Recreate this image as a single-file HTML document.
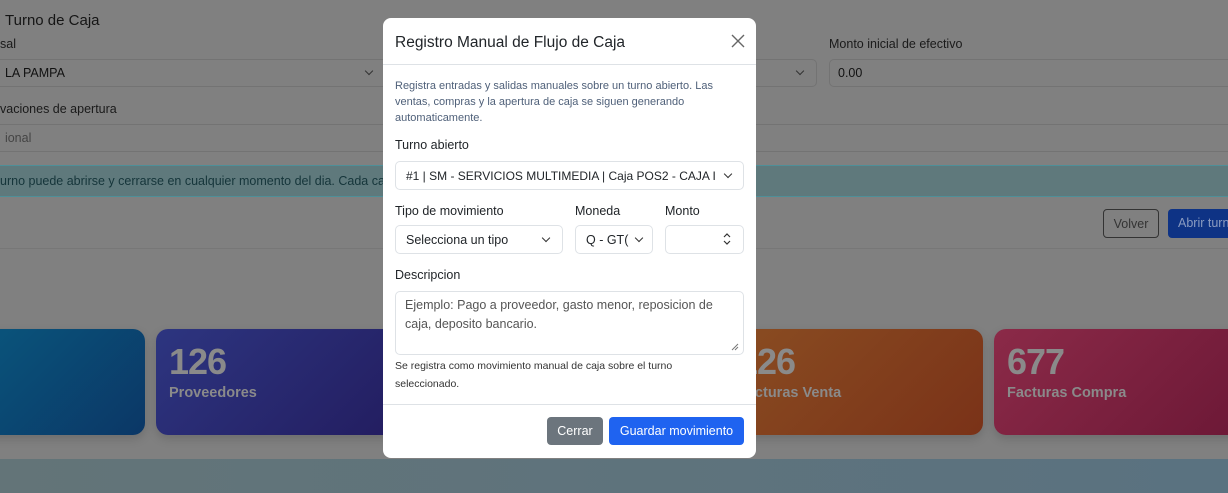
<!DOCTYPE html>
<html><head><meta charset="utf-8"><style>
*{box-sizing:border-box;margin:0;padding:0}
body{width:1228px;height:493px;overflow:hidden;background:#808080;font-family:"Liberation Sans",sans-serif;position:relative;color:#1a1a1a}
.abs{position:absolute}
.inp{position:absolute;border:1px solid #737373;border-radius:5px;height:28px;font-size:12.5px;padding:6px 8px;color:#111}
.chev{position:absolute;width:6px;height:6px;border-right:1.3px solid #333;border-bottom:1.3px solid #333;transform:rotate(45deg)}
.card{position:absolute;top:329px;height:106px;border-radius:12px;box-shadow:0 4px 10px rgba(0,0,0,.15)}
.card .n{position:absolute;left:13px;top:12px;font-size:36px;font-weight:bold;color:#8a8a8a;letter-spacing:-1px}
.card .t{position:absolute;left:13px;top:56px;font-size:14.5px;font-weight:bold;color:#8a8a8a}
.modal{position:absolute;left:383px;top:18px;width:373px;height:440px;background:#fff;border-radius:8px}
.m{position:absolute;font-size:12.5px;color:#212529}
.f{position:absolute;border:1px solid #dee2e6;border-radius:5px;height:29px;font-size:12.5px;color:#212529;padding:7px 10px;white-space:nowrap;overflow:hidden}
.mc{position:absolute;width:6px;height:6px;border-right:1.3px solid #333;border-bottom:1.3px solid #333;transform:rotate(45deg);background:#fff}
</style></head><body>
<div class="abs" style="left:5px;top:12px;font-size:15px;color:#151515">Turno de Caja</div>
<div class="abs" style="left:0;top:37px;font-size:12.5px">sal</div>
<div class="inp" style="left:-10px;top:59px;width:394px;border-width:1px 0 1px 0;border-radius:0">&nbsp;&nbsp;LA PAMPA</div>
<div class="chev" style="left:366px;top:68px"></div>
<div class="abs" style="left:0;top:102px;font-size:12.5px">vaciones de apertura</div>
<div class="inp" style="left:-10px;top:124px;width:1250px;border-width:1px 0;border-radius:0;color:#444">&nbsp;&nbsp;ional</div>
<div class="abs" style="left:0;top:165px;width:1228px;height:32px;background:#5f797c;border-top:1px solid #4e8f98;border-bottom:1px solid #4e8f98;font-size:12.5px;padding:8px 0 0 0;color:#15353a">urno puede abrirse y cerrarse en cualquier momento del dia. Cada ca</div>
<div class="inp" style="left:740px;top:59px;width:77px;border-left:0;border-radius:0 5px 5px 0"></div>
<div class="chev" style="left:797px;top:68px"></div>
<div class="abs" style="left:829px;top:37px;font-size:12.5px">Monto inicial de efectivo</div>
<div class="inp" style="left:829px;top:59px;width:410px">0.00</div>
<div class="abs" style="left:1103px;top:209px;width:56px;height:29px;border:1px solid #333;border-radius:4px;font-size:12.5px;padding:7px 0;text-align:center;color:#333">Volver</div>
<div class="abs" style="left:1168px;top:209px;width:70px;height:29px;background:#0e3385;border-radius:4px;font-size:12.5px;padding:7px 10px;color:#8a9bc0;white-space:nowrap;overflow:hidden">Abrir turno</div>
<div class="abs" style="left:0;top:248px;width:1228px;height:1px;background:#777"></div>
<div class="card" style="left:-20px;width:165px;background:linear-gradient(135deg,#0a557c,#0b3766)"></div>
<div class="card" style="left:156px;width:240px;background:linear-gradient(135deg,#2d3580,#231d60)"><div class="n">126</div><div class="t">Proveedores</div></div>
<div class="card" style="left:725px;width:258px;background:linear-gradient(135deg,#8a4d22,#7a3218)"><div class="n">126</div><div class="t">Facturas Venta</div></div>
<div class="card" style="left:994px;width:250px;background:linear-gradient(135deg,#8b2a48,#6c1836)"><div class="n">677</div><div class="t">Facturas Compra</div></div>
<div class="abs" style="left:0;top:459px;width:1228px;height:34px;background:linear-gradient(90deg,#637478,#5a7280)"></div>

<div class="modal">
<div class="m" style="left:12px;top:16px;font-size:15.5px">Registro Manual de Flujo de Caja</div>
<svg class="abs" style="left:348px;top:16px" width="14" height="14"><path d="M1 1L13 13M13 1L1 13" stroke="#666" stroke-width="1.4"/></svg>
<div class="abs" style="left:0;top:46px;width:373px;height:1px;background:#dee2e6"></div>
<div class="m" style="left:12px;top:60px;width:350px;font-size:11px;line-height:16px;color:#4f6079">Registra entradas y salidas manuales sobre un turno abierto. Las ventas, compras y la apertura de caja se siguen generando automaticamente.</div>
<div class="m" style="left:12px;top:120px">Turno abierto</div>
<div class="f" style="left:12px;top:143px;width:349px;padding-right:26px;font-size:12px">#1 | SM - SERVICIOS MULTIMEDIA | Caja POS2 - CAJA I</div>
<div class="mc" style="left:342px;top:153px"></div>
<div class="m" style="left:12px;top:186px">Tipo de movimiento</div>
<div class="m" style="left:192px;top:186px">Moneda</div>
<div class="m" style="left:282px;top:186px">Monto</div>
<div class="f" style="left:12px;top:207px;width:168px">Selecciona un tipo</div>
<div class="mc" style="left:160px;top:217px"></div>
<div class="f" style="left:192px;top:207px;width:78px;padding-right:24px">Q - GT(</div>
<div class="mc" style="left:253px;top:217px"></div>
<div class="f" style="left:282px;top:207px;width:79px"></div>
<svg class="abs" style="left:340px;top:214px" width="8" height="14"><path d="M1 5L4 2L7 5M1 9L4 12L7 9" stroke="#333" fill="none" stroke-width="1.2"/></svg>
<div class="m" style="left:12px;top:250px">Descripcion</div>
<div class="f" style="left:12px;top:273px;width:349px;height:64px;white-space:normal;line-height:19px;color:#555;padding:4px 9px">Ejemplo: Pago a proveedor, gasto menor, reposicion de caja, deposito bancario.</div>
<svg class="abs" style="left:348px;top:325px" width="8" height="8"><path d="M1 7L7 1M4 7L7 4" stroke="#777"/></svg>
<div class="m" style="left:12px;top:339px;width:330px;font-size:10.5px;line-height:18px;color:#333">Se registra como movimiento manual de caja sobre el turno seleccionado.</div>
<div class="abs" style="left:0;top:386px;width:373px;height:1px;background:#dee2e6"></div>
<div class="abs" style="left:164px;top:399px;width:56px;height:28px;background:#6c757d;border-radius:4px;color:#fff;font-size:12.5px;text-align:center;padding-top:7px">Cerrar</div>
<div class="abs" style="left:226px;top:399px;width:135px;height:28px;background:#1f63f0;border-radius:4px;color:#fff;font-size:12.5px;text-align:center;padding-top:7px">Guardar movimiento</div>
</div>
</body></html>
